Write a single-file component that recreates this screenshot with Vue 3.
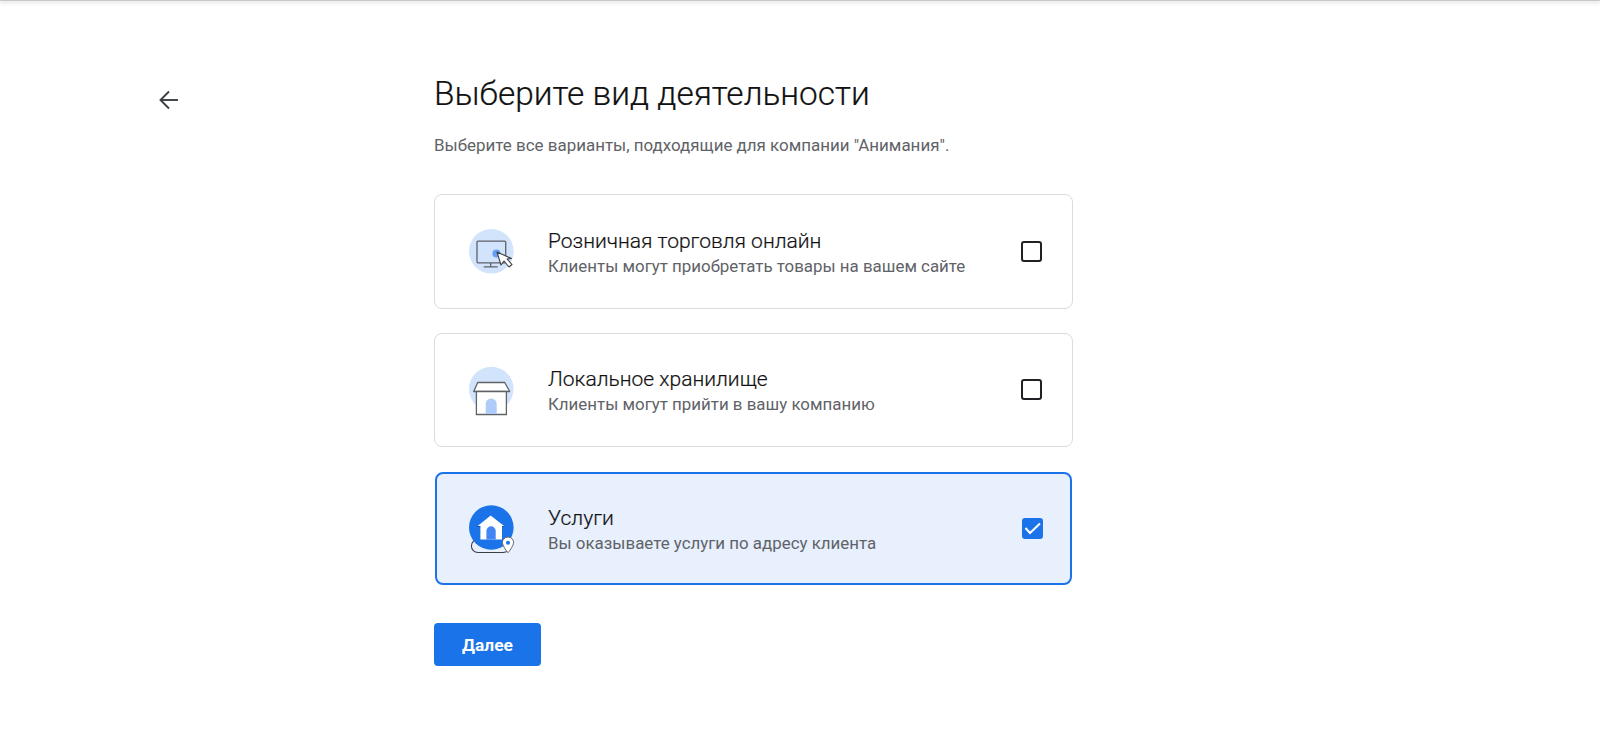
<script setup>
import { ref } from "vue";

const options = ref([
  { id: "online", title: "Розничная торговля онлайн", text: "Клиенты могут приобретать товары на вашем сайте", checked: false },
  { id: "local", title: "Локальное хранилище", text: "Клиенты могут прийти в вашу компанию", checked: false },
  { id: "service", title: "Услуги", text: "Вы оказываете услуги по адресу клиента", checked: true },
]);

const toggle = (item) => {
  item.checked = !item.checked;
};
</script>

<template>
  <div class="page">
    <div class="topbar"></div>
    <div class="content">
      <div class="back-col">
        <svg class="back" width="24" height="24" viewBox="0 0 24 24" fill="none" stroke="#3c4043" stroke-width="1.9">
          <path d="M21 12H4" />
          <path d="M12 3.5L3.5 12l8.5 8.5" />
        </svg>
      </div>
      <main class="main">
        <h1 class="title">Выберите вид деятельности</h1>
        <p class="subtitle">Выберите все варианты, подходящие для компании "Анимания".</p>

        <div class="cards">
          <div
            v-for="item in options"
            :key="item.id"
            class="card"
            :class="{ active: item.checked }"
            @click="toggle(item)"
          >
            <div class="icon">
              <svg v-if="item.id === 'online'" width="48" height="48" viewBox="0 0 48 48">
                <circle cx="24.300" cy="24.300" r="22.300" fill="#d2e3fc" />
                <rect x="10" y="14.200" width="28.700" height="21.600" rx="1" fill="none" stroke="#5f6368" stroke-width="1.3" />
                <path d="M23.700 35.800v4M16.700 39.800h14" stroke="#5f6368" stroke-width="1.3" fill="none" />
                <circle cx="29.400" cy="26.500" r="4" fill="#669df6" />
                <path d="M30 25l4 13 3-4 5 6 3-2.500-5-5.500 4.500-.5z" fill="#fff" stroke="#3c4043" stroke-width="1.1" stroke-linejoin="round" />
              </svg>
              <svg v-else-if="item.id === 'local'" width="48" height="48" viewBox="0 0 48 48">
                <circle cx="24.300" cy="23" r="22.300" fill="#d2e3fc" />
                <path d="M10.700 16.500h27l5 9H6.700z" fill="#fff" stroke="#5f6368" stroke-width="1.300" stroke-linejoin="round" />
                <path d="M9.400 25.500h30v23h-30z" fill="#fff" stroke="#5f6368" stroke-width="1.300" />
                <path d="M18.700 48V38a5.500 5.500 0 0 1 11 0v10z" fill="#aecbfa" />
              </svg>
              <svg v-else width="48" height="48" viewBox="0 0 48 48">
                <path d="M10.900 34.500h25.300a6.500 6.500 0 0 1 0 13H10.900a6.500 6.500 0 0 1 0-13z" fill="#e8f0fe" stroke="#3c4043" stroke-width="1.100" />
                <circle cx="24.300" cy="22.500" r="22.300" fill="#1a73e8" />
                <path d="M23.700 10.500L10 21.500h3.400v13H35v-13h2.700z" fill="#fff" />
                <path d="M10 21.500h3.400M35 21.500h2.700" stroke="#174ea6" stroke-width="1" />
                <path d="M19.400 34.500V26a4.650 4.650 0 0 1 9.300 0v8.500z" fill="#4285f4" />
                <path d="M41 32c-3.200 0-5.600 2.400-5.600 5.400 0 3.600 5.600 10.400 5.600 10.400s5.600-6.800 5.600-10.400c0-3-2.400-5.400-5.600-5.400z" fill="#fff" stroke="#5f6368" stroke-width="1" />
                <circle cx="41" cy="37.800" r="2" fill="#1a73e8" />
              </svg>
            </div>
            <div class="text">
              <div class="card-title">{{ item.title }}</div>
              <div class="card-desc">{{ item.text }}</div>
            </div>
            <div class="checkbox">
              <svg v-if="item.checked" width="17" height="17" viewBox="0 0 17 17" fill="none" stroke="#fff" stroke-width="2">
                <path d="M1.500 8l4.500 5 10-9.500" />
              </svg>
            </div>
          </div>
        </div>

        <button class="next">Далее</button>
      </main>
    </div>
  </div>
</template>

<style>
html, body {
  margin: 0;
  background: #fff;
}
</style>

<style scoped>
.page {
  min-height: 746px;
  font-family: Roboto, "Liberation Sans", sans-serif;
  color: #202124;
  box-sizing: border-box;
}
.topbar {
  height: 1px;
  background: #c8c8c8;
  box-shadow: 0 1px 4px rgba(60, 64, 67, 0.45);
}
.content {
  display: flex;
  padding-left: 157px;
}
.back-col {
  width: 277px;
  padding-top: 87px;
}
.back {
  display: block;
}
.main {
  width: 639px;
  padding-top: 73px;
}
.title {
  margin: 0;
  font-size: 33.400px;
  font-weight: 300;
  line-height: 40px;
  color: #111;
  -webkit-text-stroke: 0.2px #111;
}
.subtitle {
  margin: 21px 0 0;
  font-size: 16.950px;
  line-height: 20px;
  color: #5f6368;
}
.cards {
  display: flex;
  flex-direction: column;
  gap: 24px;
  margin-top: 39px;
}
.card {
  display: flex;
  align-items: center;
  height: 114.500px;
  box-sizing: border-box;
  padding: 0 30px 0 32px;
  border: 1px solid #dadce0;
  border-radius: 8px;
  cursor: pointer;
}
.card.active {
  height: 113px;
  margin: 1px 1px 0;
  background: #e8f0fe;
  border: 2px solid #1a73e8;
  padding: 0 27px 0 30px;
}
.icon {
  width: 48px;
  height: 48px;
  flex-shrink: 0;
  margin-right: 33px;
}
.icon svg {
  display: block;
  overflow: visible;
}
.text {
  flex: 1;
  padding-top: 3px;
}
.card-title {
  font-size: 21px;
  font-weight: 300;
  line-height: 26px;
  color: #111;
  -webkit-text-stroke: 0.2px #111;
}
.card-desc {
  font-size: 16.900px;
  line-height: 24px;
  color: #5f6368;
}
.checkbox {
  width: 21px;
  height: 21px;
  box-sizing: border-box;
  border: 2px solid #202124;
  border-radius: 3px;
  display: flex;
  align-items: center;
  justify-content: center;
}
.card.active .checkbox {
  background: #1a73e8;
  border-color: #1a73e8;
}
.next {
  display: block;
  margin-top: 38px;
  width: 107px;
  height: 43px;
  border: none;
  border-radius: 4px;
  background: #1a73e8;
  color: #fff;
  font-family: Roboto, "Liberation Sans", sans-serif;
  font-size: 17.400px;
  font-weight: 700;
  cursor: pointer;
}
</style>
